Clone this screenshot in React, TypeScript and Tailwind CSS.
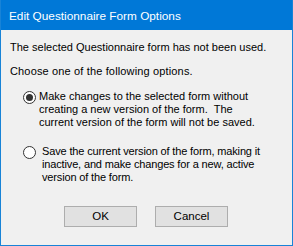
import React from "react";

function Radio({ checked }: { checked?: boolean }) {
  return (
    <div className="w-[13px] h-[13px] rounded-full border border-[#333333] bg-white flex items-center justify-center shrink-0">
      {checked && <div className="w-[7px] h-[7px] rounded-full bg-[#333333]" />}
    </div>
  );
}

export default function App() {
  return (
    <div
      className="w-[293px] h-[246px] flex flex-col bg-[#f0f0f0] border-x border-b border-[#1883d7] text-black text-[11px] leading-[13px]"
      style={{ fontFamily: '"Liberation Sans", Arial, sans-serif' }}
    >
      <div className="h-[30px] bg-[#0078d7] text-white pl-[8px] pt-[10px] shrink-0 text-[11.8px]">
        Edit Questionnaire Form Options
      </div>
      <div className="pl-[9px] pt-[11px]">The selected Questionnaire form has not been used.</div>
      <div className="pl-[9px] pt-[11px] tracking-[0.15px]">Choose one of the following options.</div>
      <div className="flex items-start pl-[22px] pt-[13px]">
        <Radio checked />
        <div className="pl-[3px] -mt-[1px]">
          Make changes to the selected form without
          <br />
          creating a new version of the form.&nbsp; The
          <br />
          current version of the form will not be saved.
        </div>
      </div>
      <div className="flex items-start pl-[22px] pt-[17px]">
        <Radio />
        <div className="pl-[6px] -mt-[1px] tracking-[-0.15px]">
          Save the current version of the form, making it
          <br />
          inactive, and make changes for a new, active
          <br />
          version of the form.
        </div>
      </div>
      <div className="flex gap-[18px] pt-[22px] pl-[63px]">
        <button className="w-[73px] h-[21px] bg-[#e1e1e1] border border-[#adadad] leading-[19px] text-[11.5px]">OK</button>
        <button className="w-[73px] h-[21px] bg-[#e1e1e1] border border-[#adadad] leading-[19px] text-[11.5px]">Cancel</button>
      </div>
    </div>
  );
}
